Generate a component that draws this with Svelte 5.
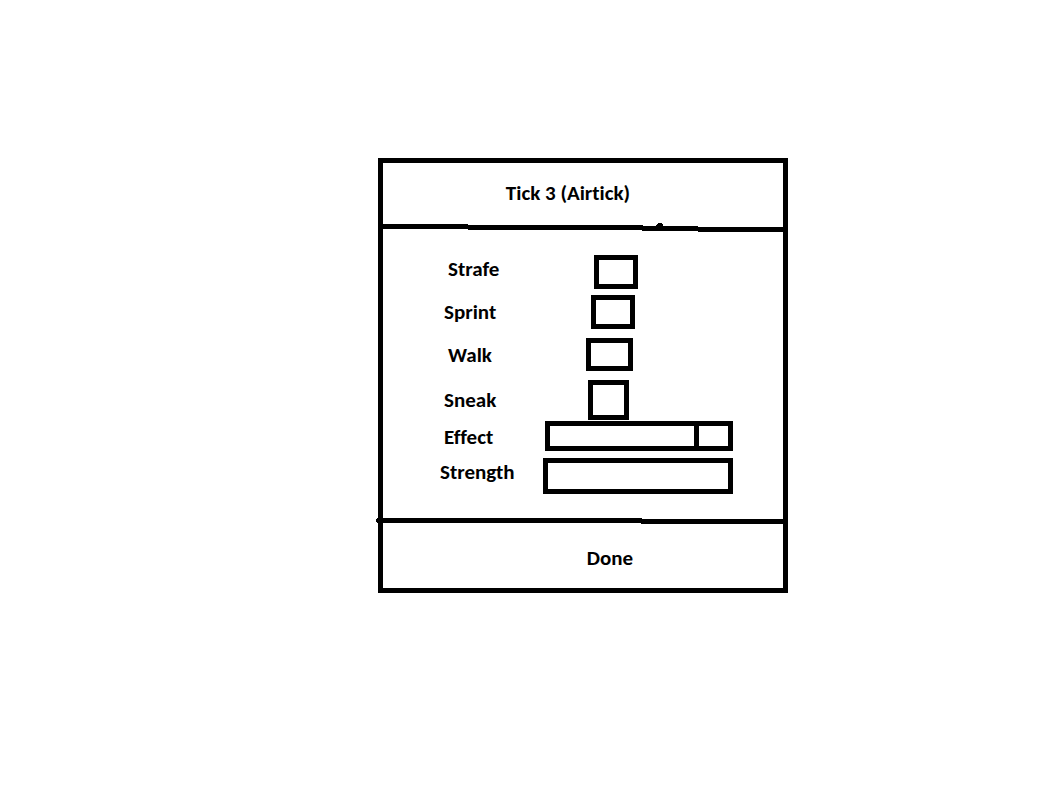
<script>
  const toggles = $state([
    { id: 'strafe', label: 'Strafe', on: false },
    { id: 'sprint', label: 'Sprint', on: false },
    { id: 'walk', label: 'Walk', on: false },
    { id: 'sneak', label: 'Sneak', on: false }
  ]);
  let effect = $state('');
  let strength = $state('');
</script>

<main class="page">
  <form class="dialog" onsubmit={(e) => e.preventDefault()}>
    <header class="head">
      <h1>Tick 3 (Airtick)</h1>
    </header>
    <!-- Hand-drawn divider, stepping down to the right -->
    <svg class="rule rule-top" viewBox="0 0 400 9" preserveAspectRatio="none" aria-hidden="true">
      <path d="M-1 1H85V2H260V3H273V2L275 0H279L280 2V3H315V4H401V9H315V8H259V7H85V6H-1Z" />
    </svg>

    <div class="fields">
      {#each toggles as t (t.id)}
        <div class="row {t.id}">
          <label for={t.id}>{t.label}</label>
          <input id={t.id} class="tick" type="checkbox" bind:checked={t.on} />
        </div>
      {/each}
      <div class="row effect">
        <label for="effect">Effect</label>
        <select id="effect" class="wide" bind:value={effect}>
          <option value=""></option>
        </select>
      </div>
      <div class="row strength">
        <label for="strength">Strength</label>
        <input id="strength" class="wide" type="text" bind:value={strength} />
      </div>
    </div>

    <svg class="rule rule-bottom" viewBox="0 0 400 6" preserveAspectRatio="none" aria-hidden="true">
      <path d="M-7 1L-5 0H259V1H401V6H258V5H-5L-7 4Z" />
    </svg>
    <footer class="foot">
      <button type="submit">Done</button>
    </footer>
  </form>
</main>

<style>
  :global(body) {
    margin: 0;
    background: #fff;
  }

  .page {
    display: grid;
    grid-template-columns: 378fr 410fr 256fr;
    padding: 158px 0;
    color: #000;
    font-family: Carlito, Lato, sans-serif;
    font-size: 21px;
    font-weight: 700;
    font-variant-ligatures: none;
    line-height: 28px;
  }

  .dialog {
    grid-column: 2;
    display: flex;
    flex-direction: column;
    border: 5px solid #000;
  }

  .head {
    padding: 16px 30px 16px 0;
    text-align: center;
  }

  h1 {
    margin: 0;
    font: inherit;
    font-variant-ligatures: none;
  }

  .rule {
    display: block;
    width: 100%;
    overflow: visible;
    fill: #000;
    shape-rendering: crispEdges;
  }

  .rule-top {
    height: 9px;
  }

  .rule-bottom {
    height: 6px;
  }

  .fields {
    padding: 23px 0 24px;
  }

  .row {
    display: grid;
    grid-template-columns: 57fr 103fr 190fr 50fr;
    align-items: center;
  }

  label {
    grid-column: 2;
  }

  input,
  select {
    grid-column: 3;
    box-sizing: border-box;
    margin: 0;
    border: 5px solid #000;
    border-radius: 0;
    background: #fff;
    color: inherit;
    font: inherit;
    appearance: none;
  }

  .tick {
    width: 44px;
    height: 34px;
    margin-left: 48px;
  }

  .tick:checked {
    background: #000;
    box-shadow: inset 0 0 0 4px #fff;
  }

  .wide {
    width: 100%;
    padding: 0 8px;
  }

  .strafe,
  .effect,
  .strength {
    align-items: start;
  }

  .strafe label,
  .walk label {
    padding-left: 8px;
  }

  .sprint label,
  .sneak label,
  .effect label {
    padding-left: 4px;
  }

  .strafe .tick {
    margin-left: 51px;
  }

  .sprint {
    margin-top: 6px;
  }

  .walk,
  .sneak {
    margin-top: 9px;
  }

  .walk .tick {
    width: 47px;
    height: 33px;
    margin-left: 43px;
  }

  .sneak .tick {
    width: 41px;
    height: 40px;
    margin-left: 45px;
  }

  .effect {
    align-items: end;
    margin-top: 1px;
  }

  .effect .wide {
    justify-self: end;
    width: 99%;
    height: 30px;
    padding-right: 40px;
    background: linear-gradient(#000, #000) right 29px top / 5px 100% no-repeat #fff;
  }

  .strength {
    margin-top: 7px;
  }

  .strength .wide {
    height: 36px;
  }

  .foot {
    display: flex;
    justify-content: center;
    padding: 20px 0 16px 54px;
  }

  button {
    padding: 0;
    border: 0;
    background: none;
    color: inherit;
    font: inherit;
    cursor: pointer;
  }
</style>
